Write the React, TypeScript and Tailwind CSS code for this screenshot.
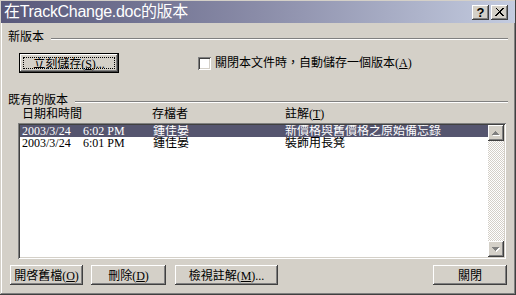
import React from 'react';

const raised =
  'bg-[#d4d0c8] shadow-[inset_-1px_-1px_#404040,inset_1px_1px_#ffffff,inset_-2px_-2px_#808080,inset_2px_2px_#d4d0c8]';

const rows = [
  { date: '2003/3/24', time: '6:02 PM', who: '鍾佳晏', note: '新價格與舊價格之原始備忘錄', sel: true },
  { date: '2003/3/24', time: '6:01 PM', who: '鍾佳晏', note: '裝飾用長凳', sel: false },
];

function Etched() {
  return <div className="flex-1 mt-[7px] h-[2px] border-t border-b border-t-[#808080] border-b-white" />;
}

function Arrow({ down }: { down?: boolean }) {
  const up = 'M7 6h1v1H7zM6 7h3v1H6zM5 8h5v1H5zM4 9h7v1H4z';
  const dn = 'M4 6h7v1H4zM5 7h5v1H5zM6 8h3v1H6zM7 9h1v1H7z';
  const d = down ? dn : up;
  return (
    <div className={`w-[16px] h-[16px] ${raised}`}>
      <svg width="16" height="16" viewBox="0 0 16 16" shapeRendering="crispEdges">
        <path d={d} fill="#ffffff" transform="translate(1 1)" />
        <path d={d} fill="#808080" />
      </svg>
    </div>
  );
}

function Btn({ children, w, ml }: { children: React.ReactNode; w: string; ml?: string }) {
  return (
    <div className={`${w} ${ml ?? ''} h-[20px] flex items-center justify-center ${raised}`}>
      <span className="mt-[1px]">{children}</span>
    </div>
  );
}

export default function App() {
  return (
    <div className="w-[516px] h-[295px] bg-[#d4d0c8] flex flex-col font-['Liberation_Serif','Noto_Sans_CJK_TC',serif] text-[12px] leading-[12px] text-black shadow-[inset_-1px_-1px_#404040,inset_1px_1px_#d4d0c8,inset_-2px_-2px_#808080,inset_2px_2px_#ffffff]">
      {/* title bar */}
      <div className="mt-[1px] mx-[1px] h-[22px] flex items-center pl-[3px] pr-[7px] bg-gradient-to-r from-[#58587a] via-[#8a8ca8] to-[#c4cce0]">
        <span className="flex-1 text-white text-[16px] leading-[16px] tracking-[-0.3px] font-['Liberation_Sans','Noto_Sans_CJK_TC',sans-serif]">
          在TrackChange.doc的版本
        </span>
        <div className={`w-[17px] h-[15px] flex items-center justify-center ${raised}`}>
          <span className="font-['Liberation_Sans',sans-serif] font-bold text-[13px] leading-[13px]">?</span>
        </div>
        <div className={`ml-[2px] w-[17px] h-[15px] flex items-center justify-center ${raised}`}>
          <svg width="9" height="8" viewBox="0 0 9 8" shapeRendering="crispEdges">
            <path d="M0 0h2v1h1v1h1v1h1V2h1V1h1V0h2v1H8v1H7v1H6v1h-1v0h1v1h1v1h1v1h1v1H7V7H6V6H5V5H4v1H3v1H2v1H0V7h1V6h1V5h1V4h1V3H3V2H2V1H1z" fill="#000" />
          </svg>
        </div>
      </div>

      <div className="flex-1 flex flex-col px-[8px]">
        {/* new version group */}
        <div className="mt-[8px] flex items-start gap-[7px]">
          <span>新版本</span>
          <Etched />
        </div>
        <div className="mt-[10px] h-[20px] flex items-center">
          <div className="ml-[11px] w-[100px] h-[20px] border border-black">
            <div className={`w-full h-full p-[3px] ${raised}`}>
              <div className="w-full h-full border border-dotted border-black flex items-center justify-center">
                <span className="mt-[1px]">立刻儲存(<u>S</u>)...</span>
              </div>
            </div>
          </div>
          <div className="ml-[79px] w-[13px] h-[13px] bg-white shadow-[inset_1px_1px_#808080,inset_-1px_-1px_#ffffff,inset_2px_2px_#404040,inset_-2px_-2px_#d4d0c8]" />
          <span className="ml-[4px]">關閉本文件時，自動儲存一個版本(<u>A</u>)</span>
        </div>

        {/* existing versions */}
        <div className="mt-[21px] flex items-start gap-[7px]">
          <span>既有的版本</span>
          <Etched />
        </div>
        <div className="mt-[2px] flex pl-[14px]">
          <span className="w-[130px]">日期和時間</span>
          <span className="w-[133px]">存檔者</span>
          <span>註解(<u>T</u>)</span>
        </div>

        <div className="mt-[3px] ml-[10px] w-[488px] h-[136px] p-[2px] bg-white shadow-[inset_1px_1px_#808080,inset_-1px_-1px_#ffffff,inset_2px_2px_#404040,inset_-2px_-2px_#d4d0c8]">
          <div className="w-full h-full flex">
            <div className="flex-1 flex flex-col">
              {rows.map((r) => (
                <div
                  key={r.time}
                  className={`h-[12px] overflow-hidden flex items-center pl-[2px] ${r.sel ? 'bg-[#55556f] text-white' : 'text-black'}`}
                >
                  <span className="w-[61px] leading-[11px]">{r.date}</span>
                  <span className="w-[70px] leading-[11px]">{r.time}</span>
                  <span className="w-[132px] leading-[11px]">{r.who}</span>
                  <span className="leading-[11px]">{r.note}</span>
                </div>
              ))}
            </div>
            <div className="w-[16px] flex flex-col">
              <Arrow />
              <div className="flex-1 bg-[repeating-conic-gradient(#d4d0c8_0_25%,#ffffff_0_50%)] bg-[length:2px_2px]" />
              <Arrow down />
            </div>
          </div>
        </div>

        {/* buttons */}
        <div className="mt-[6px] flex">
          <Btn w="w-[73px]" ml="ml-[2px]">開啓舊檔(<u>O</u>)</Btn>
          <Btn w="w-[75px]" ml="ml-[8px]">刪除(<u>D</u>)</Btn>
          <Btn w="w-[103px]" ml="ml-[9px]">檢視註解(<u>M</u>)...</Btn>
          <div className="flex-1" />
          <Btn w="w-[74px]" ml="mr-[1px]">關閉</Btn>
        </div>
      </div>
    </div>
  );
}
